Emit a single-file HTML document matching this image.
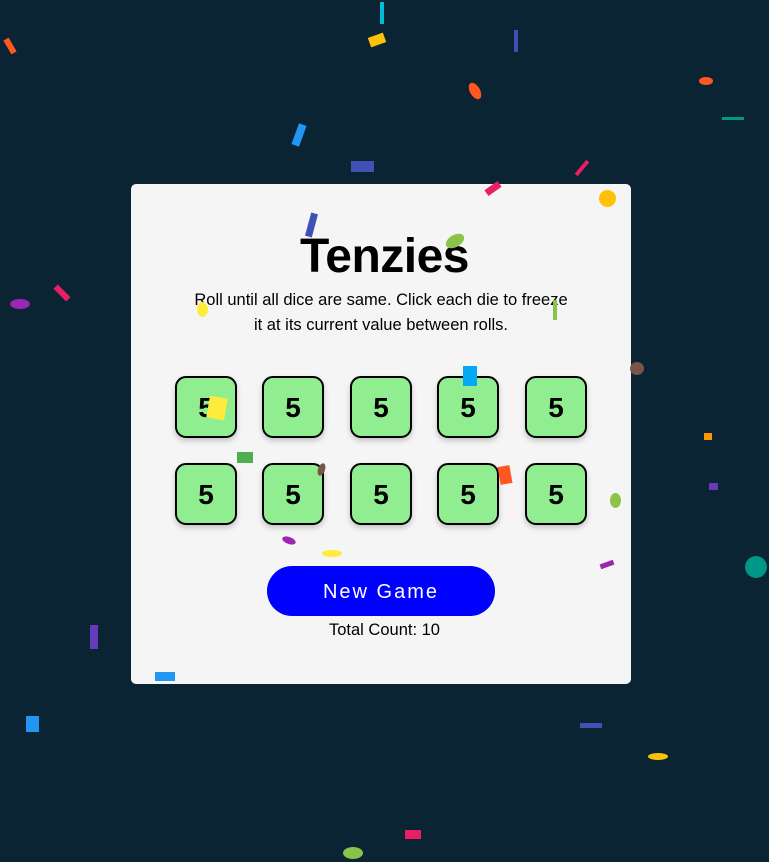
<!DOCTYPE html>
<html><head><style>
body{margin:0;width:769px;height:862px;background:#0b2434;position:relative;overflow:hidden;font-family:"Liberation Sans",sans-serif}
.card{position:absolute;left:131px;top:184px;width:500px;height:500px;background:#f5f5f5;border-radius:5px}
h1{position:absolute;left:0;right:0;top:227px;margin:0;text-align:center;font-size:48px;font-weight:bold;line-height:60px;color:#000;letter-spacing:-0.5px}
p.sub{position:absolute;left:131px;width:500px;top:288px;margin:0;text-align:center;font-size:16.5px;line-height:25px;color:#000;letter-spacing:0;white-space:nowrap}
.d{position:absolute;width:58px;height:58px;border:2px solid #000;border-radius:11px;background:#90ee90;box-shadow:0 3px 6px rgba(0,0,0,.2);font-weight:bold;font-size:28px;text-align:center;line-height:60px}
.btn{position:absolute;left:267px;top:566px;width:228px;height:50px;border-radius:25px;background:#0000ff;color:#fff;font-size:20px;text-align:center;line-height:52px;letter-spacing:2px}
.tc{position:absolute;left:0;right:0;top:621px;text-align:center;font-size:16.5px}
.c{position:absolute}
</style></head><body>
<div class="card"></div>
<h1>Tenzies</h1>
<p class="sub">Roll until all dice are same. Click each die to freeze<br>it at its current value between rolls.</p>
<div class="d" style="left:175px;top:376px">5</div>
<div class="d" style="left:262px;top:376px">5</div>
<div class="d" style="left:350px;top:376px">5</div>
<div class="d" style="left:437px;top:376px">5</div>
<div class="d" style="left:525px;top:376px">5</div>
<div class="d" style="left:175px;top:463px">5</div>
<div class="d" style="left:262px;top:463px">5</div>
<div class="d" style="left:350px;top:463px">5</div>
<div class="d" style="left:437px;top:463px">5</div>
<div class="d" style="left:525px;top:463px">5</div>
<div class="btn">New Game</div>
<div class="tc">Total Count: 10</div>
<div class="c" style="left:208px;top:397px;width:18px;height:22px;background:#ffeb3b;transform:rotate(10deg)"></div>
<div class="c" style="left:463px;top:366px;width:14px;height:20px;background:#03a9f4"></div>
<div class="c" style="left:445px;top:235px;width:20px;height:12px;background:#8bc34a;border-radius:50%;transform:rotate(-30deg)"></div>
<div class="c" style="left:308px;top:213px;width:7px;height:24px;background:#3f51b5;transform:rotate(15deg)"></div>
<div class="c" style="left:197px;top:302px;width:11px;height:15px;background:#ffeb3b;border-radius:50%"></div>
<div class="c" style="left:553px;top:300px;width:4px;height:20px;background:#8bc34a"></div>
<div class="c" style="left:499px;top:466px;width:12px;height:18px;background:#ff5722;transform:rotate(-10deg)"></div>
<div class="c" style="left:237px;top:452px;width:16px;height:11px;background:#4caf50"></div>
<div class="c" style="left:610px;top:493px;width:11px;height:15px;background:#8bc34a;border-radius:50%"></div>
<div class="c" style="left:322px;top:550px;width:20px;height:7px;background:#ffeb3b;border-radius:50%"></div>
<div class="c" style="left:599px;top:190px;width:17px;height:17px;background:#ffc107;border-radius:50%"></div>
<div class="c" style="left:745px;top:556px;width:22px;height:22px;background:#009688;border-radius:50%"></div>
<div class="c" style="left:351px;top:161px;width:23px;height:11px;background:#3f51b5"></div>
<div class="c" style="left:295px;top:124px;width:8px;height:22px;background:#2196f3;transform:rotate(20deg)"></div>
<div class="c" style="left:369px;top:35px;width:16px;height:10px;background:#ffc107;transform:rotate(-20deg)"></div>
<div class="c" style="left:470px;top:82px;width:10px;height:18px;background:#ff5722;border-radius:50%;transform:rotate(-30deg)"></div>
<div class="c" style="left:485px;top:185px;width:16px;height:7px;background:#e91e63;transform:rotate(-35deg)"></div>
<div class="c" style="left:10px;top:299px;width:20px;height:10px;background:#9c27b0;border-radius:50%"></div>
<div class="c" style="left:53px;top:290px;width:18px;height:6px;background:#e91e63;transform:rotate(45deg)"></div>
<div class="c" style="left:90px;top:625px;width:8px;height:24px;background:#673ab7"></div>
<div class="c" style="left:26px;top:716px;width:13px;height:16px;background:#2196f3"></div>
<div class="c" style="left:155px;top:672px;width:20px;height:9px;background:#2196f3"></div>
<div class="c" style="left:405px;top:830px;width:16px;height:9px;background:#e91e63"></div>
<div class="c" style="left:343px;top:847px;width:20px;height:12px;background:#8bc34a;border-radius:50%"></div>
<div class="c" style="left:648px;top:753px;width:20px;height:7px;background:#ffc107;border-radius:50%"></div>
<div class="c" style="left:580px;top:723px;width:22px;height:5px;background:#3f51b5"></div>
<div class="c" style="left:630px;top:362px;width:14px;height:13px;background:#795548;border-radius:50%"></div>
<div class="c" style="left:699px;top:77px;width:14px;height:8px;background:#ff5722;border-radius:50%"></div>
<div class="c" style="left:722px;top:117px;width:22px;height:3px;background:#009688"></div>
<div class="c" style="left:380px;top:2px;width:4px;height:22px;background:#00bcd4"></div>
<div class="c" style="left:514px;top:30px;width:4px;height:22px;background:#3f51b5"></div>
<div class="c" style="left:7px;top:38px;width:6px;height:16px;background:#ff5722;transform:rotate(-30deg)"></div>
<div class="c" style="left:600px;top:562px;width:14px;height:5px;background:#9c27b0;transform:rotate(-20deg)"></div>
<div class="c" style="left:704px;top:433px;width:8px;height:7px;background:#ff9800"></div>
<div class="c" style="left:709px;top:483px;width:9px;height:7px;background:#673ab7"></div>
<div class="c" style="left:580px;top:159px;width:4px;height:18px;background:#e91e63;transform:rotate(40deg)"></div>
<div class="c" style="left:282px;top:537px;width:14px;height:7px;background:#9c27b0;border-radius:50%;transform:rotate(20deg)"></div>
<div class="c" style="left:318px;top:463px;width:7px;height:13px;background:#795548;border-radius:50%;transform:rotate(20deg)"></div>
</body></html>
